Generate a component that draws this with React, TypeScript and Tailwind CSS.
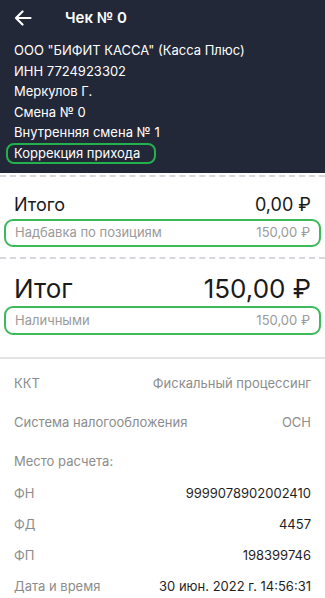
import React from "react";

const font = { fontFamily: "Inter, 'Open Sans', sans-serif" };

function Row({ label, value, dark }: { label: string; value?: string; dark?: boolean }) {
  return (
    <div className="flex justify-between items-center text-[13px] leading-[16px]">
      <span className="text-[#8c8c8c]">{label}</span>
      {value && <span className={dark ? "text-[#1f1f1f]" : "text-[#8c8c8c]"}>{value}</span>}
    </div>
  );
}

export default function App() {
  return (
    <div className="w-[325px] h-[598px] overflow-hidden bg-white" style={font}>
      <div className="bg-[#232838] text-white h-[173px] pt-[6px]">
        <div className="flex items-center h-[24px] pl-[14px]">
          <svg width="18" height="16" viewBox="0 0 18 16" fill="none" stroke="white" strokeWidth="2.2" strokeLinecap="round" strokeLinejoin="round">
            <path d="M16.5 8H2M8.5 1.5L2 8l6.5 6.5" />
          </svg>
          <span className="ml-[33px] text-[15px] font-semibold">Чек № 0</span>
        </div>
        <div className="mt-[10px] pl-[14px] text-[13px] leading-[20.6px]">
          <div>ООО "БИФИТ КАССА" (Касса Плюс)</div>
          <div>ИНН 7724923302</div>
          <div>Меркулов Г.</div>
          <div>Смена № 0</div>
          <div>Внутренняя смена № 1</div>
          <div className="-ml-[8px] w-[150px] h-[21px] rounded-[8px] border-2 border-[#22b14c] pl-[6px] leading-[17px]">Коррекция прихода</div>
        </div>
      </div>
      <div className="border-t-2 border-dashed border-[#d6d8de] mt-[2px]" />
      <div className="px-[14px] pt-[16px]">
        <div className="flex justify-between items-center text-[18px] leading-[24px] text-[#1a1a1a]">
          <span>Итого</span>
          <span>0,00 ₽</span>
        </div>
      </div>
      <div className="mx-[4px] mt-[2px] h-[28px] rounded-[9px] border-2 border-[#3cb95a] flex justify-between items-center px-[9px] text-[13px] text-[#9a9a9a]">
        <span>Надбавка по позициям</span>
        <span>150,00 ₽</span>
      </div>
      <div className="border-t-2 border-dashed border-[#d6d8de] mt-[10px]" />
      <div className="px-[14px] pt-[14px]">
        <div className="flex justify-between items-center text-[26px] leading-[32px] text-[#1a1a1a]">
          <span>Итог</span>
          <span>150,00 ₽</span>
        </div>
      </div>
      <div className="mx-[4px] mt-[1px] h-[29px] rounded-[9px] border-2 border-[#3cb95a] flex justify-between items-center px-[9px] text-[13px] text-[#9a9a9a]">
        <span>Наличными</span>
        <span>150,00 ₽</span>
      </div>
      <div className="border-t-2 border-[#e4e4e4] mt-[22px]" />
      <div className="px-[14px] pt-[16px] flex flex-col">
        <Row label="ККТ" value="Фискальный процессинг" />
        <div className="h-[23px]" />
        <Row label="Система налогообложения" value="ОСН" />
        <div className="h-[23px]" />
        <Row label="Место расчета:" />
        <div className="h-[16px]" />
        <Row label="ФН" value="9999078902002410" dark />
        <div className="h-[15px]" />
        <Row label="ФД" value="4457" dark />
        <div className="h-[15px]" />
        <Row label="ФП" value="198399746" dark />
        <div className="h-[15px]" />
        <Row label="Дата и время" value="30 июн. 2022 г. 14:56:31" dark />
      </div>
    </div>
  );
}
